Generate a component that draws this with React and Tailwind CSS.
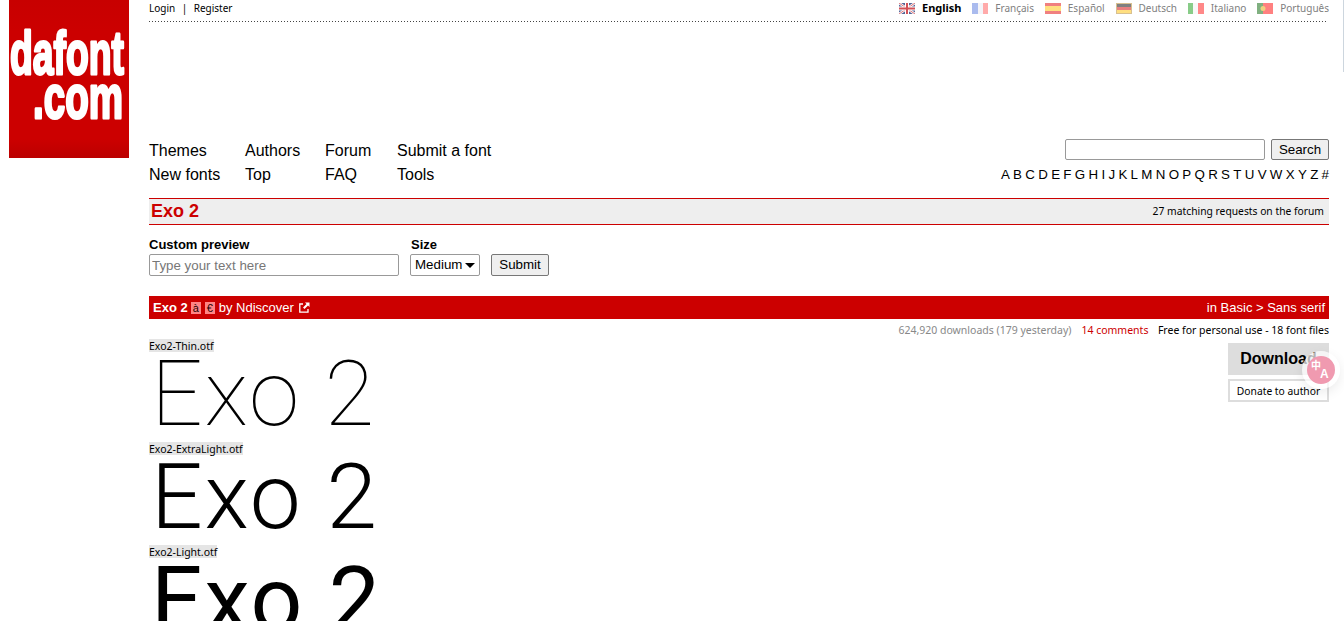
import React from 'react';

const sans = "font-['Liberation_Sans',Arial,sans-serif]";
const noto = "font-['Noto_Sans',Tahoma,sans-serif]";

const Flag = ({ code }) => {
  if (code === 'en') {
    return (
      <svg width="16" height="11" viewBox="0 0 16 11" className="shrink-0 opacity-80">
        <rect width="16" height="11" fill="#2b3f7e" />
        <path d="M0 0L16 11M16 0L0 11" stroke="#fff" strokeWidth="2.4" />
        <path d="M0 0L16 11M16 0L0 11" stroke="#c8252c" strokeWidth="0.8" />
        <rect x="6" width="4" height="11" fill="#fff" />
        <rect y="3.5" width="16" height="4" fill="#fff" />
        <rect x="7" width="2" height="11" fill="#c8252c" />
        <rect y="4.5" width="16" height="2" fill="#c8252c" />
      </svg>
    );
  }
  const bands = {
    fr: ['#aabbee', '#f4f4f8', '#ffaaaa'],
    it: ['#88cc88', '#f8f8f8', '#ff8888'],
  }[code];
  if (bands) {
    return (
      <span className="flex w-4 h-[11px] shrink-0">
        {bands.map(c => <span key={c} className="flex-1" style={{ background: c }} />)}
      </span>
    );
  }
  if (code === 'es') {
    return (
      <span className="flex flex-col w-4 h-[11px] shrink-0">
        <span className="h-[3px] bg-[#f08080]" />
        <span className="h-[5px] bg-[#ffe080]" />
        <span className="h-[3px] bg-[#f08080]" />
      </span>
    );
  }
  if (code === 'de') {
    return (
      <span className="flex flex-col w-4 h-[11px] shrink-0 border border-[#d8c090]">
        <span className="flex-1 bg-[#808080]" />
        <span className="flex-1 bg-[#e88080]" />
        <span className="flex-1 bg-[#ffdf80]" />
      </span>
    );
  }
  return (
    <svg width="16" height="11" viewBox="0 0 16 11" className="shrink-0">
      <rect width="16" height="11" fill="#ff8080" />
      <rect width="6" height="11" fill="#80b080" />
      <circle cx="6" cy="5.5" r="2.5" fill="#f0d080" />
    </svg>
  );
};

const languages = [
  { code: 'fr', name: 'Français' },
  { code: 'es', name: 'Español' },
  { code: 'de', name: 'Deutsch' },
  { code: 'it', name: 'Italiano' },
  { code: 'pt', name: 'Português' },
];

const navColumns = [
  { width: 'w-[96px]', links: ['Themes', 'New fonts'] },
  { width: 'w-[80px]', links: ['Authors', 'Top'] },
  { width: 'w-[72px]', links: ['Forum', 'FAQ'] },
  { width: 'w-auto', links: ['Submit a font', 'Tools'] },
];

const letters = 'ABCDEFGHIJKLMNOPQRSTUVWXYZ#'.split('');

const previews = [
  { file: 'Exo2-Thin.otf', weight: 'font-[130]' },
  { file: 'Exo2-ExtraLight.otf', weight: 'font-[280]' },
  { file: 'Exo2-Light.otf', weight: 'font-[380]' },
];

export default function App() {
  return (
    <div className={`relative flex h-[621px] overflow-hidden bg-white text-black ${sans}`}>
      {/* logo */}
      <div className="w-[149px] shrink-0 pl-[9px]">
        <svg width="120" height="158" viewBox="0 0 120 158" className="block">
          <defs>
            <linearGradient id="logoBg" x1="0" y1="0" x2="0" y2="1">
              <stop offset="0" stopColor="#c80000" />
              <stop offset="0.2" stopColor="#cc0000" />
              <stop offset="0.88" stopColor="#cc0000" />
              <stop offset="1" stopColor="#bb0000" />
            </linearGradient>
          </defs>
          <rect width="120" height="158" fill="url(#logoBg)" />
          <text x="1" y="74" fill="#fff" stroke="#fff" strokeWidth="3" strokeLinejoin="round" fontFamily="Liberation Sans" fontWeight="700" fontSize="62" textLength="114" lengthAdjust="spacingAndGlyphs">dafont</text>
          <text x="24" y="118" fill="#fff" stroke="#fff" strokeWidth="3" strokeLinejoin="round" fontFamily="Liberation Sans" fontWeight="700" fontSize="62" textLength="90" lengthAdjust="spacingAndGlyphs">.com</text>
        </svg>
      </div>

      <div className="w-[1180px] shrink-0">
        {/* top bar */}
        <div className={`flex items-center justify-between h-[21px] pb-[4px] text-[10px] ${noto}`}>
          <div className="flex">
            <span>Login</span>
            <span className="ml-[6.5px]">|</span>
            <span className="ml-[6.5px]">Register</span>
          </div>
          <div className="flex items-center">
            <Flag code="en" />
            <span className="ml-[7px] text-[11px] font-bold">English</span>
            {languages.map(l => (
              <span key={l.code} className="flex items-center ml-[10.8px] text-[#808080]">
                <Flag code={l.code} />
                <span className="ml-[7px]">{l.name}</span>
              </span>
            ))}
          </div>
        </div>
        <div className="h-px w-[1177px] bg-[repeating-linear-gradient(90deg,#444_0,#444_1px,transparent_1px,transparent_3px)]" />

        {/* nav */}
        <div className="flex justify-between h-[176px] pt-[117px]">
          <div className="flex text-[16px] leading-[24px]">
            {navColumns.map(col => (
              <div key={col.links[0]} className={col.width}>
                {col.links.map(link => <div key={link}>{link}</div>)}
              </div>
            ))}
          </div>
          <div className="flex flex-col items-end">
            <div className="flex gap-[6px] h-[21px]">
              <input className="w-[200px] h-[21px] border border-[#999] rounded-[2px]" />
              <button className="w-[58px] h-[21px] border border-[#777] rounded-[2px] bg-[#efefef] text-[13.33px] leading-none">Search</button>
            </div>
            <div className="flex gap-[3.3px] mt-[6px] text-[13.33px] leading-[18px]">
              {letters.map(c => <span key={c}>{c}</span>)}
            </div>
          </div>
        </div>

        {/* title */}
        <div className="flex items-center justify-between h-[27px] pl-[2px] pr-[5px] bg-[#eee] border-y border-[#cc0000]">
          <span className="text-[18px] font-bold text-[#cc0000]">Exo 2</span>
          <span className={`text-[10.3px] ${noto}`}>27 matching requests on the forum</span>
        </div>

        {/* custom preview */}
        <div className="flex items-end h-[51px]">
          <div className="w-[261px]">
            <div className="mb-[2px] text-[13px] font-bold leading-[15px]">Custom preview</div>
            <input placeholder="Type your text here" className="block w-[250px] h-[22px] px-[2px] border border-[#999] rounded-[2px] text-[13.33px] placeholder:text-[#777]" />
          </div>
          <div className="w-[81px]">
            <div className="mb-[2px] pl-[1px] text-[13px] font-bold leading-[15px]">Size</div>
            <div className="flex items-center justify-between w-[70px] h-[22px] pl-[4px] pr-[4px] border border-[#999] rounded-[2px] text-[13.33px]">
              Medium
              <svg width="10" height="5" viewBox="0 0 10 5"><path d="M0 0h10L5 5z" fill="#000" /></svg>
            </div>
          </div>
          <button className="w-[58px] h-[22px] border border-[#777] rounded-[2px] bg-[#efefef] text-[13.33px] leading-none">Submit</button>
        </div>

        {/* font header */}
        <div className="flex items-center justify-between h-[23px] mt-[20px] px-[4px] bg-[#cc0000] text-white text-[13px]">
          <div className="flex items-center">
            <span className="font-bold">Exo 2</span>
            <span className="ml-[3px] w-[10px] h-[12px] leading-[12px] text-center text-[11px] bg-[#ff8585] text-[#200]">à</span>
            <span className="ml-[4px] w-[10px] h-[12px] leading-[12px] text-center text-[11px] bg-[#ff8585] text-[#200]">€</span>
            <span className="ml-[4px]">by Ndiscover</span>
            <svg width="11" height="11" viewBox="0 0 11 11" className="ml-[5px]" fill="none">
              <path d="M4 2H0.8V10.2H9V7" stroke="#fff" strokeWidth="1.3" />
              <path d="M6 0.5H10.5V5L9 3.5L5.5 7L4 5.5L7.5 2z" fill="#fff" />
            </svg>
          </div>
          <span>in Basic &gt; Sans serif</span>
        </div>

        {/* info */}
        <div className={`flex justify-end items-center h-[20px] pt-[4px] text-[10.5px] ${noto}`}>
          <span className="text-[#888]">624,920 downloads (179 yesterday)</span>
          <span className="ml-[10px] text-[#cc0000]">14 comments</span>
          <span className="ml-[9.5px]">Free for personal use - 18 font files</span>
        </div>

        <div className="flex justify-between">
          <div>
            {previews.map(p => (
              <div key={p.file} className="h-[103px]">
                <span className={`block w-fit h-[13px] leading-[15px] text-[10.5px] bg-[#e5e5e5] ${noto}`}>{p.file}</span>
                <div className={`pl-[2px] text-[91px] leading-[84px] tracking-[1.8px] whitespace-nowrap font-['Roboto',sans-serif] ${p.weight}`}>Exo 2</div>
              </div>
            ))}
          </div>
          <div className="relative w-[101px] mt-[4px]">
            <div className="flex items-center justify-center h-[32px] bg-[#ddd] text-[16px] font-bold">Download</div>
            <div className={`flex items-center justify-center h-[23px] mt-[4px] pt-[2px] border-[2px] border-[#ddd] text-[10.3px] ${noto}`}>Donate to author</div>
            <div className="absolute left-[74px] top-[8px] flex items-center justify-center w-[38px] h-[38px] rounded-full bg-white/70 shadow-[0_4px_12px_rgba(0,0,0,0.08)]">
              <div className="relative w-[28px] h-[28px] rounded-full bg-[#f09ab0] text-white font-bold">
                <span className="absolute left-[4px] top-[3px] text-[10px] leading-[11px] font-['Noto_Sans_CJK_SC',sans-serif]">中</span>
                <span className={`absolute left-[13px] top-[12px] text-[12px] leading-[13px] ${sans}`}>A</span>
              </div>
            </div>
          </div>
        </div>
      </div>

      {/* sliver of scrollbar at the window edge */}
      <div className="absolute right-0 top-0 w-px h-[72px] bg-[#cdd6de]" />
    </div>
  );
}
